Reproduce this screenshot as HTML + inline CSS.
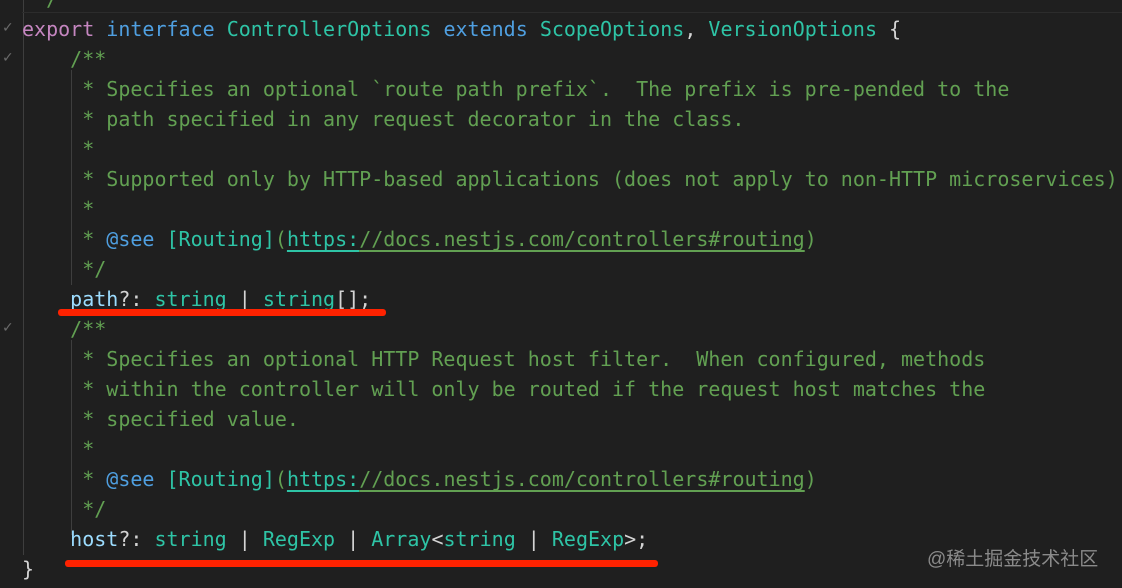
<!DOCTYPE html>
<html><head><meta charset="utf-8"><style>
html,body{margin:0;padding:0;background:#1f1f1f;width:1122px;height:588px;overflow:hidden;position:relative}
.code{position:absolute;left:22px;top:-16px;font-family:"DejaVu Sans Mono","Liberation Mono",monospace;font-size:20px;line-height:30px;white-space:pre;color:#d4d4d4}
.c{color:#62a052}.k{color:#c586c0}.b{color:#4f9fe0}.t{color:#2ec4a6}.p{color:#9cdcfe}
.u{text-decoration:underline;text-underline-offset:4px;text-decoration-thickness:2px}
.g{position:absolute;width:1px;background:#3e3e3e}
.r{position:absolute;background:#fe2200;height:7px;border-radius:3px}
.f{position:absolute;left:2px;color:#6a6a6a;font-family:"DejaVu Sans",sans-serif;font-size:14px}
.wm{position:absolute;left:927px;top:544px;color:#8a8a8a;font-family:"Liberation Sans","Noto Sans CJK SC",sans-serif;font-size:19px}
.hl{position:absolute;left:22px;top:12px;width:1100px;height:1px;background:#2c2c2c}
</style></head><body>
<div class="g" style="left:23px;top:0;height:555px"></div>
<div class="g" style="left:71px;top:70px;height:215px"></div>
<div class="g" style="left:71px;top:340px;height:195px"></div>
<div class="hl"></div>
<div class="f" style="top:20px">✓</div>
<div class="f" style="top:50px">✓</div>
<div class="f" style="top:320px">✓</div>
<div class="code"><span class="c"> */</span>
<span class="k">export</span> <span class="b">interface</span> <span class="t">ControllerOptions</span> <span class="b">extends</span> <span class="t">ScopeOptions</span>, <span class="t">VersionOptions</span> {
<span class="c">    /**</span>
<span class="c">     * Specifies an optional `route path prefix`.  The prefix is pre-pended to the</span>
<span class="c">     * path specified in any request decorator in the class.</span>
<span class="c">     *</span>
<span class="c">     * Supported only by HTTP-based applications (does not apply to non-HTTP microservices).</span>
<span class="c">     *</span>
<span class="c">     * <span class="b">@see</span> <span class="t">[Routing]</span>(<span class="u t">https:</span><span class="u">//docs.nestjs.com/controllers#routing</span>)</span>
<span class="c">     */</span>
    <span class="p">path</span>?: <span class="t">string</span> | <span class="t">string</span>[];
<span class="c">    /**</span>
<span class="c">     * Specifies an optional HTTP Request host filter.  When configured, methods</span>
<span class="c">     * within the controller will only be routed if the request host matches the</span>
<span class="c">     * specified value.</span>
<span class="c">     *</span>
<span class="c">     * <span class="b">@see</span> <span class="t">[Routing]</span>(<span class="u t">https:</span><span class="u">//docs.nestjs.com/controllers#routing</span>)</span>
<span class="c">     */</span>
    <span class="p">host</span>?: <span class="t">string</span> | <span class="t">RegExp</span> | <span class="t">Array</span>&lt;<span class="t">string</span> | <span class="t">RegExp</span>&gt;;
}</div>
<div class="r" style="left:58px;top:309px;width:328px"></div>
<div class="r" style="left:65px;top:560px;width:593px"></div>
<div class="wm">@稀土掘金技术社区</div>
</body></html>
